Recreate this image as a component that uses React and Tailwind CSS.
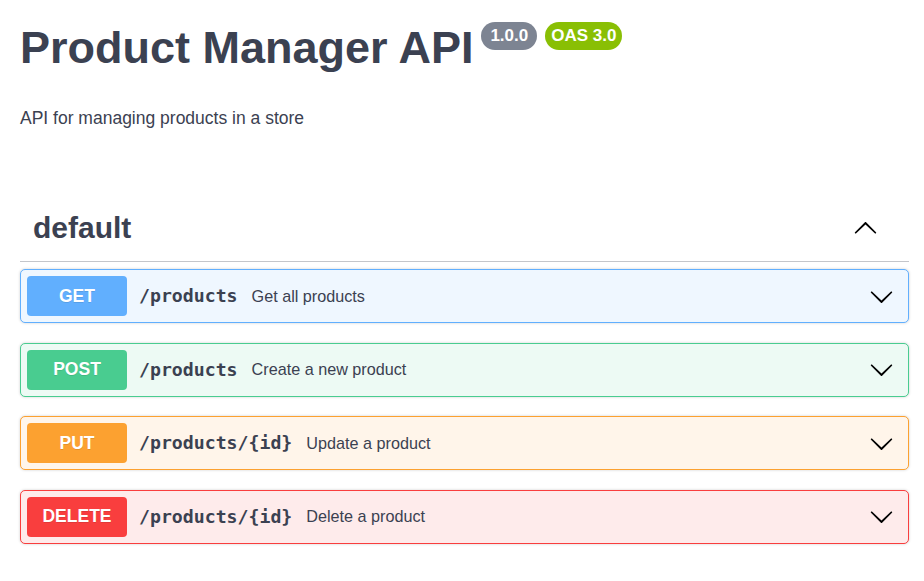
import React from "react";

const ops = [
  { m: "GET", path: "/products", sum: "Get all products", bg: "bg-[#eff7ff]", border: "border-[#61affe]", mbg: "bg-[#61affe]" },
  { m: "POST", path: "/products", sum: "Create a new product", bg: "bg-[#edfaf4]", border: "border-[#49cc90]", mbg: "bg-[#49cc90]" },
  { m: "PUT", path: "/products/{id}", sum: "Update a product", bg: "bg-[#fff5ea]", border: "border-[#fca130]", mbg: "bg-[#fca130]" },
  { m: "DELETE", path: "/products/{id}", sum: "Delete a product", bg: "bg-[#feebeb]", border: "border-[#f93e3e]", mbg: "bg-[#f93e3e]" },
];

function Arrow({ up }) {
  return (
    <svg width="25" height="25" viewBox="0 0 20 20" className={up ? "rotate-180" : ""} fill="#000">
      <path d="M17.418 6.109c.272-.268.709-.268.979 0s.271.701 0 .969l-7.908 7.83c-.27.268-.707.268-.979 0l-7.908-7.83c-.27-.268-.27-.701 0-.969.271-.268.709-.268.979 0L10 13.25l7.418-7.141z" />
    </svg>
  );
}

export default function App() {
  return (
    <div className="min-h-[581px] bg-white pl-[20px] pr-[15px] font-['Liberation_Sans',Arial,sans-serif] text-[#3b4151]">
      <div className="flex items-start pt-[22px]">
        <h1 className="mt-[3px] text-[45px] font-bold leading-[45px]">Product Manager API</h1>
        <span className="ml-[8px] flex h-[28px] items-center rounded-full bg-[#7d8492] px-[9px] text-[17px] font-bold text-white">1.0.0</span>
        <span className="ml-[8px] flex h-[28px] items-center rounded-full bg-[#89bf04] px-[6px] text-[17px] font-bold text-white">OAS 3.0</span>
      </div>
      <p className="mt-[37px] text-[17.5px] leading-[22px]">API for managing products in a store</p>

      <div className="mt-[84px] flex items-center justify-between border-b border-[#c4c6cb] pb-[18px] pl-[13px] pr-[31px]">
        <h2 className="text-[30px] font-bold leading-[30px]">default</h2>
        <Arrow up />
      </div>

      <div className="mt-[7px] flex flex-col gap-[19.5px]">
        {ops.map((o) => (
          <div key={o.m} className={`flex items-center rounded-[5px] border p-[6px] shadow-[0_0_3px_rgba(0,0,0,0.19)] ${o.bg} ${o.border}`}>
            <div className={`flex h-[40px] w-[100px] items-center justify-center rounded-[4px] text-[17.5px] font-bold text-white [text-shadow:0_1px_0_rgba(0,0,0,0.1)] ${o.mbg}`}>
              {o.m}
            </div>
            <span className="ml-[12px] font-['DejaVu_Sans_Mono',monospace] text-[18.2px] font-bold">{o.path}</span>
            <span className="ml-[14px] text-[16.2px]">{o.sum}</span>
            <div className="ml-auto mr-[8px] flex">
              <Arrow />
            </div>
          </div>
        ))}
      </div>
    </div>
  );
}
